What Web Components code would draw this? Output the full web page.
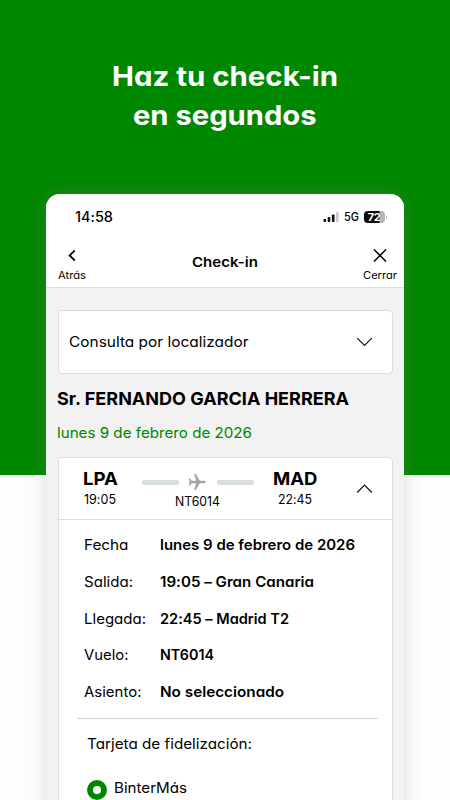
<!DOCTYPE html>
<html lang="es"><head><meta charset="utf-8"><title>Check-in</title>
<style>html,body{margin:0;height:100%;overflow:hidden}body{font-family:Inter,"Noto Sans",sans-serif;color:#000}</style></head>
<body><checkin-promo></checkin-promo>
<script>
function define(name, html) {
  const tpl = document.createElement('template');
  tpl.innerHTML = html;
  customElements.define(name, class extends HTMLElement {
    constructor() {
      super();
      this.attachShadow({ mode: 'open' }).append(tpl.content.cloneNode(true));
    }
  });
}

// One line of text, widened or narrowed so it spans the given width.
customElements.define('fit-text', class extends HTMLElement {
  constructor() {
    super();
    this.attachShadow({ mode: 'open' }).innerHTML = `<style>
      :host{display:block;white-space:nowrap;flex:none;font-feature-settings:"cv11" 1,"calt" 0}
      span{display:inline-block;transform-origin:0 50%}</style><span><slot></slot></span>`;
  }
  connectedCallback() {
    const w = parseFloat(this.getAttribute('w'));
    const span = this.shadowRoot.querySelector('span');
    const natural = span.getBoundingClientRect().width;
    span.style.transform = `scaleX(${w / natural})`;
    this.style.width = w + 'px';
  }
});

define('promo-title', `<style>
  :host{display:flex;flex-direction:column;align-items:center;padding-top:57px;padding-right:1px;height:137px;box-sizing:content-box;color:#fff;font-size:27.5px;font-weight:750;line-height:39px}
  </style><fit-text w="226">Haz tu check-in</fit-text><fit-text w="183.5">en segundos</fit-text>`);

define('status-bar', `<style>
  :host{display:flex;align-items:center;height:46px;padding:0 17px 0 29px;line-height:20px}
  .time{font-size:14px;font-weight:550;margin-right:auto}.net{font-size:11.5px;font-weight:450;margin:0 5px 0 5px}svg{display:block}
  </style><fit-text class="time" w="38">14:58</fit-text>
  <svg width="16" height="12" viewBox="0 0 16 12"><g fill="#111"><rect x=".5" y="8" width="2.6" height="3" rx=".7"/><rect x="4.7" y="6" width="2.6" height="5" rx=".7"/><rect x="8.9" y="3.5" width="2.6" height="7.5" rx=".7"/></g><rect x="13" y="1" width="2.6" height="10" rx=".7" fill="#c8c8c8"/></svg>
  <fit-text class="net" w="15">5G</fit-text>
  <svg width="23" height="12" viewBox="0 0 23 12"><rect width="21" height="12" rx="4" fill="#b4b4b4"/><path d="M4 0H15.500V12H4A4 4 0 0 1 0 8V4A4 4 0 0 1 4 0Z" fill="#0a0a0a"/><path d="M22 4.200a2 2 0 0 1 0 3.600Z" fill="#b4b4b4"/><text x="10" y="10" text-anchor="middle" font-family="Inter,sans-serif" font-size="11" font-weight="700" fill="#fff" letter-spacing="-.5">72</text></svg>`);

define('nav-bar', `<style>
  :host{display:grid;grid-template-columns:51px 1fr 49px;height:47px;border-bottom:1px solid #dcdcdc;line-height:14px}
  .side{display:flex;flex-direction:column;align-items:center;padding-top:8px;font-size:10.5px}
  .side svg{display:block;margin-bottom:6px}
  .title{display:flex;justify-content:center;padding-top:15px;padding-right:2px;font-size:13.5px;font-weight:600}
  </style><div class="side"><svg width="16" height="15" viewBox="0 0 16 15" fill="none" stroke="#080808" stroke-width="1.8"><path d="m10.800 2.500-5.200 5 5.200 5"/></svg><fit-text w="28">Atrás</fit-text></div>
  <div class="title"><fit-text w="66">Check-in</fit-text></div>
  <div class="side"><svg width="16" height="15" viewBox="0 0 16 15" fill="none" stroke="#080808" stroke-width="1.6"><path d="m2 1.500 12 12M14 1.500l-12 12"/></svg><fit-text w="34">Cerrar</fit-text></div>`);

define('lookup-box', `<style>
  :host{display:flex;align-items:center;justify-content:space-between;box-sizing:border-box;height:64px;padding:0 19px 0 10px;background:#fff;border:1px solid #dcdcdc;border-radius:4px;font-size:14.5px;font-weight:370;line-height:20px}
  svg{display:block}</style><fit-text w="179.5">Consulta por localizador</fit-text>
  <svg width="17" height="10" viewBox="0 0 17 10" fill="none" stroke="#111" stroke-width="1.200"><path d="m1.200 1.200 7.300 7.300 7.300-7.300"/></svg>`);

define('flight-head', `<style>
  :host{display:grid;grid-template-columns:83px 112px 83px 1fr;height:61px;border-bottom:1px solid #dcdcdc}
  .port{display:flex;flex-direction:column;align-items:center;padding-top:10px;font-size:13px;font-weight:370;line-height:19px}
  .code{font-size:18px;font-weight:700;line-height:22px}
  .route{display:flex;flex-direction:column;align-items:center;padding-top:15px;font-size:13px;font-weight:370;line-height:18px}
  .line{display:flex;align-items:center;justify-content:space-between;width:112px;height:18px;margin-bottom:1px}
  i{width:37px;height:5px;border-radius:2px;background:#d8dedb}
  .toggle{display:flex;align-items:center;justify-content:center}svg{display:block}
  </style><div class="port"><fit-text class="code" w="35">LPA</fit-text><fit-text w="32">19:05</fit-text></div>
  <div class="route"><div class="line"><i></i><svg width="19" height="18" viewBox="0 0 19 18"><path fill="#a6a6a6" d="M17.700 9c0 .8-.8 1.300-1.800 1.300h-4L7.800 17H6.100l2-6.700H3.700L2.100 12.400H.7L1.600 9 .7 5.600h1.400L3.700 7.700h4.400L6.100 1h1.700l4.100 6.700h4C16.900 7.700 17.700 8.200 17.700 9Z"/></svg><i></i></div><fit-text w="45">NT6014</fit-text></div>
  <div class="port"><fit-text class="code" w="44.5">MAD</fit-text><fit-text w="34">22:45</fit-text></div>
  <div class="toggle"><svg width="17" height="10" viewBox="0 0 17 10" fill="none" stroke="#111" stroke-width="1.200"><path d="m1.200 8.500 7.300-7.300 7.300 7.300"/></svg></div>`);

define('detail-row', `<style>
  :host{display:grid;grid-template-columns:75.5px 1fr;align-items:center;height:36.65px;font-size:14.5px;font-weight:370;line-height:20px}
  ::slotted([slot=value]){font-weight:600}
  </style><slot name="label"></slot><slot name="value"></slot>`);

define('loyalty-option', `<style>
  :host{display:flex;align-items:flex-start;gap:7px;line-height:20px}
  b{box-sizing:border-box;width:20px;height:20px;margin-top:2px;border:6px solid #008700;border-radius:50%;background:#fff}
  </style><b></b><slot></slot>`);

define('flight-card', `<style>
  :host{display:block;box-sizing:border-box;height:400px;background:#fff;border:1px solid #dcdcdc;border-radius:4px}
  .rows{padding:7px 0 0 25.500px}.more{margin:8px 14px 0 18px;border-top:1px solid #d2d2d2;padding:15px 0 0 10px;font-size:14.5px;font-weight:370;line-height:20px}
  loyalty-option{margin-top:24px}
  </style><flight-head></flight-head>
  <div class="rows">
  <detail-row><fit-text slot="label" w="44.5">Fecha</fit-text><fit-text slot="value" w="195">lunes 9 de febrero de 2026</fit-text></detail-row>
  <detail-row><fit-text slot="label" w="49">Salida:</fit-text><fit-text slot="value" w="154">19:05 – Gran Canaria</fit-text></detail-row>
  <detail-row><fit-text slot="label" w="62">Llegada:</fit-text><fit-text slot="value" w="129">22:45 – Madrid T2</fit-text></detail-row>
  <detail-row><fit-text slot="label" w="44.5">Vuelo:</fit-text><fit-text slot="value" w="54">NT6014</fit-text></detail-row>
  <detail-row><fit-text slot="label" w="57.5">Asiento:</fit-text><fit-text slot="value" w="124">No seleccionado</fit-text></detail-row>
  </div>
  <div class="more"><fit-text w="165">Tarjeta de fidelización:</fit-text><loyalty-option><fit-text w="73">BinterMás</fit-text></loyalty-option></div>`);

define('phone-screen', `<style>
  :host{display:block;box-sizing:border-box;width:358px;height:640px;margin:0 46px;background:#f2f2f2;border-radius:14px 14px 0 0;overflow:hidden;box-shadow:0 0 18px rgba(130,130,130,.28)}
  .top{background:#fff}.content{padding:22px 11px 0 11.500px}
  .name{font-size:18px;font-weight:700;line-height:24px;margin:13px 0 0 -.5px}
  .date{font-size:14.5px;font-weight:370;line-height:20px;margin:12px 0 14px -.5px;color:#008700}
  </style><div class="top"><status-bar></status-bar><nav-bar></nav-bar></div>
  <div class="content"><lookup-box></lookup-box><fit-text class="name" w="292">Sr. FERNANDO GARCIA HERRERA</fit-text><fit-text class="date" w="195">lunes 9 de febrero de 2026</fit-text><flight-card></flight-card></div>`);

define('checkin-promo', `<style>
  :host{display:block;width:450px;height:800px;overflow:hidden;background:linear-gradient(#008700 475px,#fdfdfd 475px)}
  </style><promo-title></promo-title><phone-screen></phone-screen>`);
</script></body></html>
